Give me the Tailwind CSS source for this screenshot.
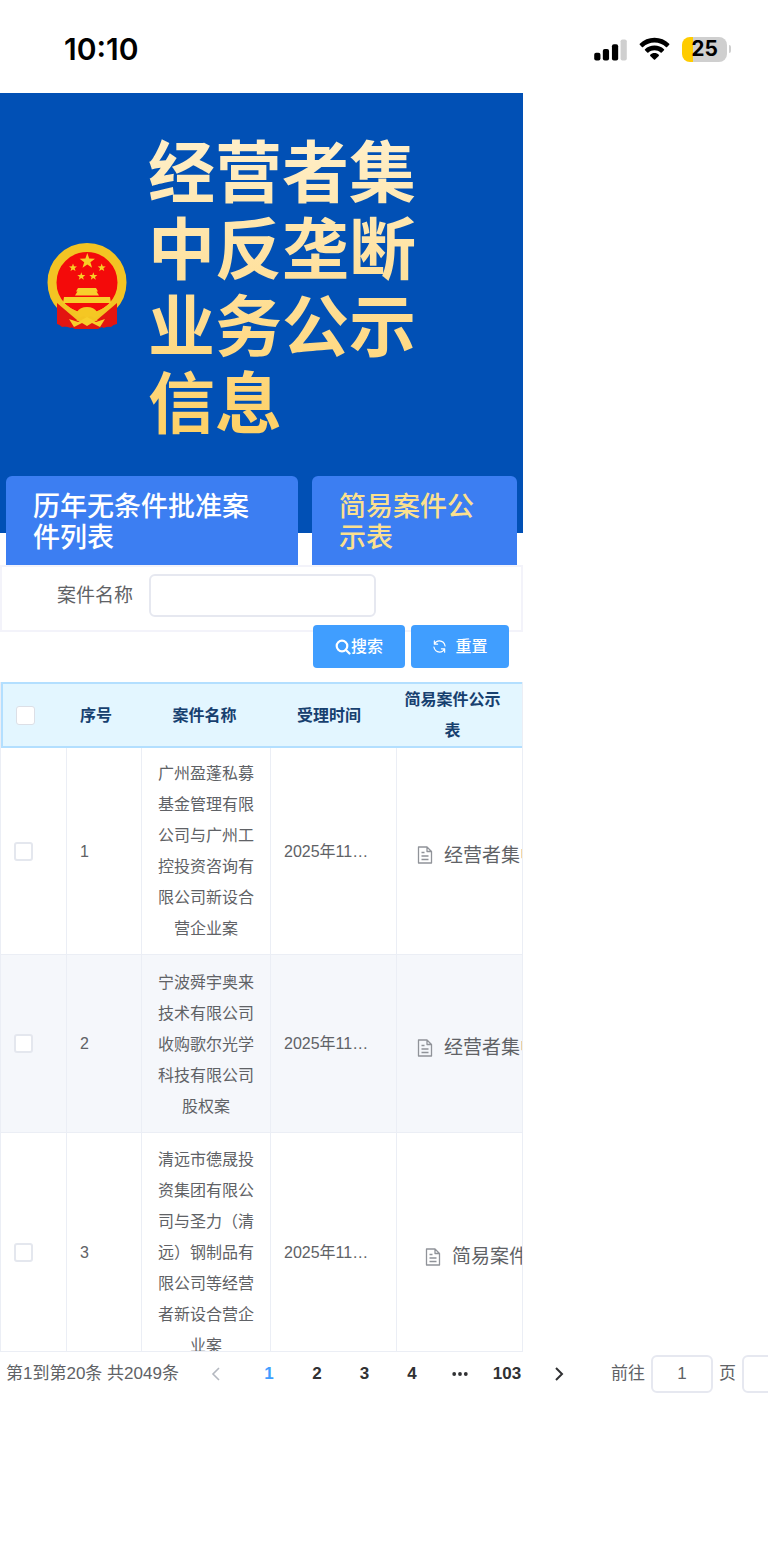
<!DOCTYPE html>
<html lang="zh-CN">
<head>
<meta charset="utf-8">
<meta name="viewport" content="width=device-width, initial-scale=1">
<title>经营者集中反垄断业务公示信息</title>
<script src="https://cdn.jsdelivr.net/npm/@tailwindcss/browser@4"></script>
</head>
<body class="min-h-screen overflow-x-hidden bg-white font-['Liberation_Sans','Noto_Sans_CJK_SC',sans-serif] text-[#606266]">

<!-- Status bar -->
<div class="flex h-[93px] items-center justify-between pt-[5px] pr-[37px] pl-16 text-black">
  <span class="font-[Inter,sans-serif] text-[30px] font-semibold">10:10</span>
  <div class="flex items-center gap-3">
    <svg class="h-[23px] w-[33px]" viewBox="0 0 34 24" aria-hidden="true">
      <rect x="0" y="15.500" width="6.500" height="8" rx="2"/>
      <rect x="9" y="11.500" width="6.500" height="12" rx="2"/>
      <rect x="18.500" y="6.500" width="6.500" height="17" rx="2"/>
      <rect x="27.500" y="1.500" width="6.500" height="22" rx="2" fill="#cfcfcf"/>
    </svg>
    <svg class="h-[24px] w-[31px]" viewBox="0 0 32 24" aria-hidden="true">
      <path d="M16 0.500C22 0.500 27.300 2.800 31.200 6.500Q31.700 7.100 31.200 7.700L29 9.900Q28.400 10.400 27.800 9.900C24.600 7 20.500 5.300 16 5.300S7.400 7 4.200 9.900Q3.600 10.400 3 9.900L0.800 7.700Q0.300 7.100 0.800 6.500C4.700 2.800 10 0.500 16 0.500Z"/>
      <path d="M16 8.400C19.800 8.400 23.200 9.800 25.800 12.200Q26.400 12.800 25.800 13.400L23.500 15.700Q22.900 16.200 22.300 15.700C20.600 14.200 18.400 13.300 16 13.300S11.400 14.200 9.700 15.700Q9.100 16.200 8.500 15.700L6.200 13.400Q5.600 12.800 6.200 12.200C8.800 9.800 12.200 8.400 16 8.400Z"/>
      <path d="M16 16.200C17.800 16.200 19.300 16.900 20.400 17.900Q20.900 18.500 20.400 19.100L16.600 22.900Q16 23.400 15.400 22.900L11.600 19.100Q11.100 18.500 11.600 17.900C12.700 16.900 14.200 16.200 16 16.200Z"/>
    </svg>
    <div class="flex items-center gap-[2px]">
      <div class="flex h-[25px] w-[45px] items-center justify-center rounded-lg bg-linear-to-r from-[#ffcc00] from-25% to-[#cfcfcf] to-25% font-[Inter,sans-serif] text-[21px] font-bold">25</div>
      <div class="h-2 w-[2px] rounded-r-full bg-[#cfcfcf]"></div>
    </div>
  </div>
</div>

<main class="w-[68.1%]">
  <!-- Banner -->
  <header class="flex items-center gap-[21px] bg-[#0150b5] px-[47px] pt-9 pb-24">
    <svg class="mt-2 h-[88px] w-[80px] shrink-0" viewBox="0 0 80 88" role="img" aria-label="国徽">
      <path d="M11 60L13 66L10 80L15 84L22 83L28 86H51L57 83L64 84L69 80L67 66L69 60Z" fill="#df1712"/>
      <circle cx="40" cy="39.500" r="35" fill="#f40a0a" stroke="#f3c423" stroke-width="9"/>
      <path d="M10 60L30 77L24 85L10 81Z" fill="#e31510"/>
      <path d="M70 60L50 77L56 85L70 81Z" fill="#e31510"/>
      <path d="M11 57Q24 71 40 73Q56 71 69 57" fill="none" stroke="#f3c423" stroke-width="4"/>
      <path fill="#f8ce25" d="M40.300 10L42.200 15.600L48 15.700L43.400 19.200L45.100 24.800L40.300 21.500L35.500 24.800L37.200 19.200L32.600 15.700L38.400 15.600Z"/>
      <path id="star" fill="#f8ce25" d="M26 20.500L27 23.300L30 23.400L27.700 25.200L28.500 28L26 26.400L23.500 28L24.300 25.200L22 23.400L25 23.300Z"/>
      <use href="#star" x="28.700"/>
      <use href="#star" x="8.300" y="8.700"/>
      <use href="#star" x="20.300" y="8.700"/>
      <path fill="#f8cf2c" d="M31 45H49L51 48.500H29ZM30.500 48.500H49.500L52 52.500H28ZM17 54H63L64 60H16Z"/>
      <path fill="#f5c723" d="M30 69Q33 64 40 64Q47 64 50 69L54 71L48 75L43 73L40 76L37 73L32 75L26 71Z"/>
      <path fill="#f8cf2c" d="M22 76L31 79L40 74L49 79L58 76L53 84L45 80L40 83L35 80L27 84Z"/>
    </svg>
    <h1 class="bg-linear-to-b from-[#fff0cb] to-[#fed064] bg-clip-text font-['Noto_Sans_CJK_SC',sans-serif] text-[67px] leading-[77px] font-bold text-transparent">经营者集中反垄断业务公示信息</h1>
  </header>

  <!-- Tabs -->
  <nav class="-mt-[57px] grid grid-cols-[292fr_205fr] gap-[14px] px-[6px] text-[27px] leading-[31px] font-medium">
    <a href="#approved" class="rounded-t-md bg-[#3c7ef2] px-[27px] pt-4 pb-[11px] text-white">历年无条件批准案件列表</a>
    <a href="#simple" class="rounded-t-md bg-[#3c7ef2] px-[27px] pt-4 pb-[11px] text-[#fbe08e]" aria-current="page">简易案件公示表</a>
  </nav>

  <!-- Search form -->
  <form>
    <div class="flex h-[67px] items-start gap-4 border-2 border-[#f3f3fa] pt-[7px] pl-[55px]">
      <label for="case-name" class="text-[19px] leading-[43px]">案件名称</label>
      <input id="case-name" type="text" class="h-[43px] w-[227px] rounded-md border-2 border-[#e6e8f0] px-3 text-[19px]">
    </div>
    <div class="-mt-[7px] flex justify-end gap-[6px] pr-[14px] text-base font-medium text-white">
      <button type="button" class="flex h-[43px] w-[92px] items-center justify-center rounded bg-[#409eff]">
        <svg class="size-4" viewBox="0 0 16 16" fill="none" stroke="currentColor" stroke-width="2.200" stroke-linecap="round" aria-hidden="true"><circle cx="7" cy="7" r="5.300"/><path d="M11 11L14.500 14.500"/></svg>搜索
      </button>
      <button type="reset" class="flex h-[43px] w-[98px] items-center justify-center gap-2 rounded bg-[#409eff]">
        <svg class="size-[15px]" viewBox="0 0 16 16" fill="none" stroke="currentColor" stroke-width="1.200" stroke-linecap="round" stroke-linejoin="round" aria-hidden="true"><path d="M2.500 2V5.500H6M2.500 5.500A6 6 0 0 1 8 2Q13 2.300 14 7.500M13.500 14V10.500H10M13.500 10.500A6 6 0 0 1 8 14Q3 13.700 2 8.500"/></svg>重置
      </button>
    </div>
  </form>

  <!-- Case list -->
  <div class="mt-[14px] h-[670px] overflow-hidden border border-t-0 border-[#ebeef5]">
    <table class="w-full table-fixed border-separate border-spacing-0 text-base leading-[31px]">
      <colgroup><col class="w-[66px]"><col class="w-[75px]"><col class="w-[129px]"><col class="w-[126px]"><col></colgroup>
      <thead class="bg-[#e3f6ff] text-[#17406f]">
        <tr class="*:border-y-2 *:border-[#b3dfff]">
          <th class="border-l-2 pl-[13px] text-left"><input type="checkbox" aria-label="全选" class="block size-[19px] appearance-none rounded-[3px] border border-[#dcdfe6] bg-white"></th>
          <th class="pl-[13px] text-left font-bold">序号</th>
          <th class="pr-1 font-bold">案件名称</th>
          <th class="pr-[10px] font-bold">受理时间</th>
          <th class="px-1 pr-[18px] font-bold">简易案件公示表</th>
        </tr>
      </thead>
      <tbody>
        <tr class="*:border-b *:border-[#ebeef5]">
          <td class="border-r pl-[13px]"><input type="checkbox" aria-label="选择第1条" class="block size-[19px] appearance-none rounded-[3px] border-2 border-[#e4e7ee] bg-white"></td>
          <td class="border-r pl-[13px]">1</td>
          <td class="border-r px-4 py-[10px] text-center">广州盈蓬私募基金管理有限公司与广州工控投资咨询有限公司新设合营企业案</td>
          <td class="truncate border-r px-[13px]">2025年11月21日</td>
          <td class="overflow-hidden pt-[8px] pl-[20px] text-[19px]"><a href="#case-1" class="flex items-center gap-[11px] whitespace-nowrap"><svg class="h-[18px] w-4 shrink-0" viewBox="0 0 16 18" fill="none" stroke="#909399" stroke-width="1.300" stroke-linejoin="round" aria-hidden="true"><path d="M1.500 1H10L14.500 5.500V17H1.500ZM10 1V5.500H14.500M4.500 6.500H7.500M4.500 10H11.500M4.500 13.500H11.500"/></svg>经营者集中简易案件公示表</a></td>
        </tr>
        <tr class="bg-[#f5f7fb] *:border-b *:border-[#ebeef5]">
          <td class="border-r pl-[13px]"><input type="checkbox" aria-label="选择第2条" class="block size-[19px] appearance-none rounded-[3px] border-2 border-[#e4e7ee] bg-white"></td>
          <td class="border-r pl-[13px]">2</td>
          <td class="border-r px-4 pt-3 pb-[10px] text-center">宁波舜宇奥来技术有限公司收购歌尔光学科技有限公司股权案</td>
          <td class="truncate border-r px-[13px]">2025年11月21日</td>
          <td class="overflow-hidden pt-[8px] pl-[20px] text-[19px]"><a href="#case-2" class="flex items-center gap-[11px] whitespace-nowrap"><svg class="h-[18px] w-4 shrink-0" viewBox="0 0 16 18" fill="none" stroke="#909399" stroke-width="1.300" stroke-linejoin="round" aria-hidden="true"><path d="M1.500 1H10L14.500 5.500V17H1.500ZM10 1V5.500H14.500M4.500 6.500H7.500M4.500 10H11.500M4.500 13.500H11.500"/></svg>经营者集中简易案件公示表</a></td>
        </tr>
        <tr class="*:border-[#ebeef5]">
          <td class="border-r pl-[13px]"><input type="checkbox" aria-label="选择第3条" class="block size-[19px] appearance-none rounded-[3px] border-2 border-[#e4e7ee] bg-white"></td>
          <td class="border-r pl-[13px]">3</td>
          <td class="border-r px-4 py-[11px] text-center">清远市德晟投资集团有限公司与圣力（清远）钢制品有限公司等经营者新设合营企业案</td>
          <td class="truncate border-r px-[13px]">2025年11月21日</td>
          <td class="overflow-hidden pt-[8px] pl-[28px] text-[19px]"><a href="#case-3" class="flex items-center gap-[11px] whitespace-nowrap"><svg class="h-[18px] w-4 shrink-0" viewBox="0 0 16 18" fill="none" stroke="#909399" stroke-width="1.300" stroke-linejoin="round" aria-hidden="true"><path d="M1.500 1H10L14.500 5.500V17H1.500ZM10 1V5.500H14.500M4.500 6.500H7.500M4.500 10H11.500M4.500 13.500H11.500"/></svg>简易案件公示表</a></td>
        </tr>
      </tbody>
    </table>
  </div>
</main>

<!-- Pagination -->
<nav aria-label="分页" class="flex h-[44px] items-center overflow-hidden pl-[6px] text-[17px] whitespace-nowrap">
  <span class="w-[186px] shrink-0">第1到第20条 共2049条</span>
  <button type="button" aria-label="上一页" class="flex w-[48px] shrink-0 justify-center text-[#b4b8c0]"><svg class="size-4" viewBox="0 0 16 16" fill="none" stroke="currentColor" stroke-width="1.600" aria-hidden="true"><path d="M11 2L5 8L11 14"/></svg></button>
  <div class="flex shrink-0 pl-[5px] font-bold text-[#303133]">
    <button type="button" aria-current="page" class="w-12 text-[#409eff]">1</button>
    <button type="button" class="w-12">2</button>
    <button type="button" class="w-[47px]">3</button>
    <button type="button" class="w-12">4</button>
    <button type="button" aria-label="更多" class="flex w-[47px] items-center justify-center"><svg class="h-4 w-4" viewBox="0 0 16 16" fill="currentColor" aria-hidden="true"><circle cx="2.200" cy="8" r="1.900"/><circle cx="8" cy="8" r="1.900"/><circle cx="13.800" cy="8" r="1.900"/></svg></button>
    <button type="button" class="w-12">103</button>
    <button type="button" aria-label="下一页" class="flex w-14 items-center justify-center"><svg class="size-4" viewBox="0 0 16 16" fill="none" stroke="currentColor" stroke-width="2" aria-hidden="true"><path d="M5 2L11 8L5 14"/></svg></button>
  </div>
  <label for="jump" class="ml-[24px] shrink-0">前往</label>
  <input id="jump" type="text" value="1" class="mx-[6px] h-[38px] w-[62px] shrink-0 rounded-md border-2 border-[#e6e8f0] text-center">
  <span class="shrink-0">页</span>
  <input type="text" aria-label="每页条数" class="ml-[6px] h-[38px] w-[120px] shrink-0 rounded-md border-2 border-[#e6e8f0]">
</nav>
</body>
</html>
